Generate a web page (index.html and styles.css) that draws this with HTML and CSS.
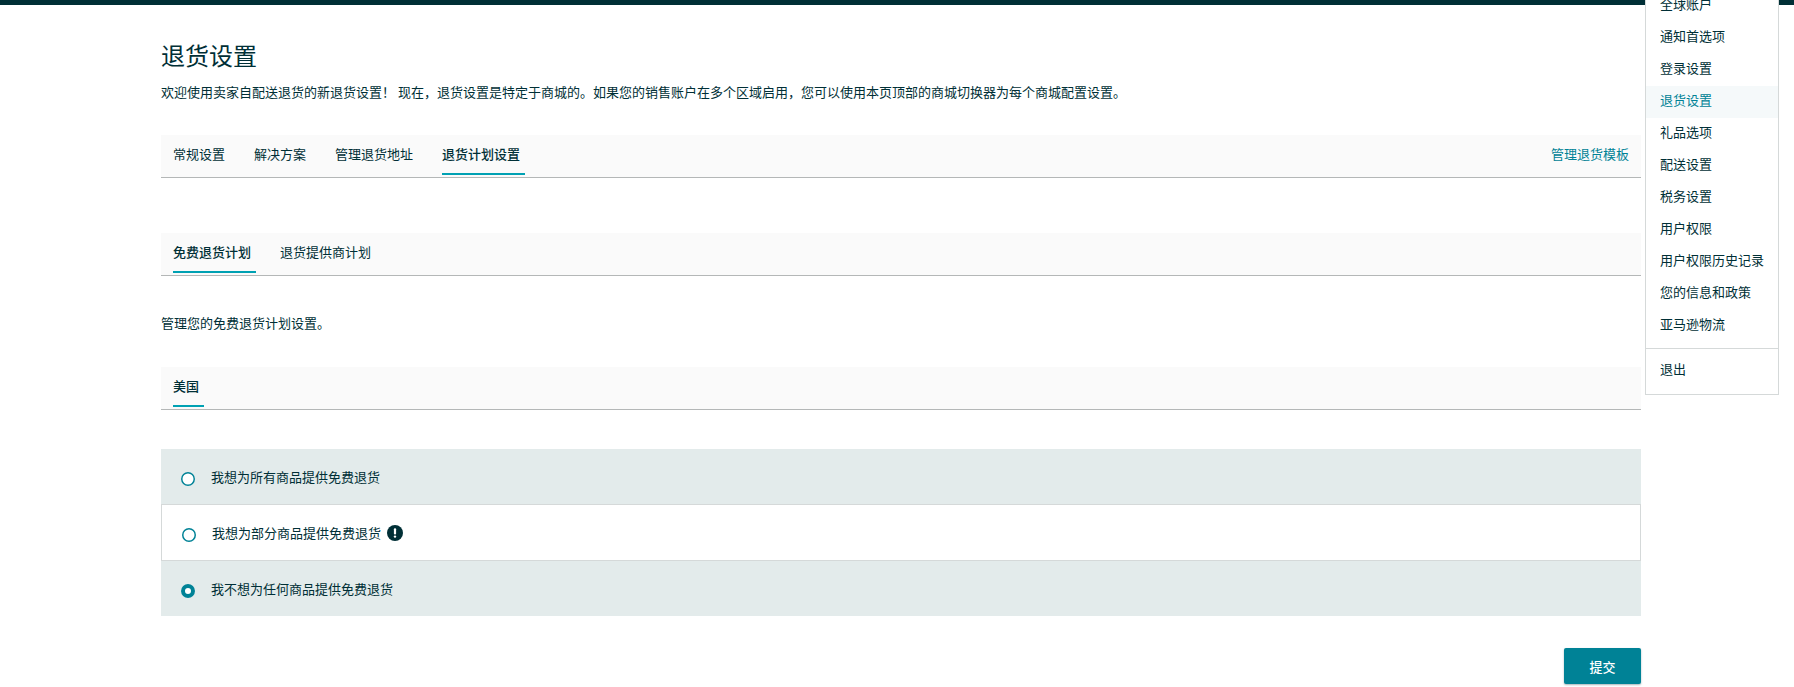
FILE: index.html
```html
<!DOCTYPE html>
<html lang="zh-CN">
<head>
<meta charset="utf-8">
<title>退货设置</title>
<link rel="stylesheet" href="styles.css">
</head>
<body>
<div class="topbar"></div>
<main class="content">
  <h1 class="title">退货设置</h1>
  <p class="intro">欢迎使用卖家自配送退货的新退货设置！ 现在，退货设置是特定于商城的。如果您的销售账户在多个区域启用，您可以使用本页顶部的商城切换器为每个商城配置设置。</p>

  <nav class="tabs tabs-main">
    <a class="tab">常规设置</a>
    <a class="tab">解决方案</a>
    <a class="tab">管理退货地址</a>
    <a class="tab active">退货计划设置</a>
    <a class="tab-link">管理退货模板</a>
  </nav>

  <nav class="tabs tabs-sub">
    <a class="tab active">免费退货计划</a>
    <a class="tab">退货提供商计划</a>
  </nav>

  <p class="desc">管理您的免费退货计划设置。</p>

  <nav class="tabs tabs-region">
    <a class="tab active">美国</a>
  </nav>

  <div class="options">
    <label class="option shaded"><span class="radio"></span><span class="label">我想为所有商品提供免费退货</span></label>
    <label class="option plain"><span class="radio"></span><span class="label">我想为部分商品提供免费退货</span>
      <svg class="alert" width="16" height="16" viewBox="0 0 16 16"><circle cx="8" cy="8" r="8" fill="#002f36"/><rect x="6.9" y="3.2" width="2.2" height="6.2" rx="1" fill="#fff"/><circle cx="8" cy="11.6" r="1.2" fill="#fff"/></svg>
    </label>
    <label class="option shaded"><span class="radio checked"></span><span class="label">我不想为任何商品提供免费退货</span></label>
  </div>

  <div class="actions"><button class="submit">提交</button></div>
</main>

<div class="menu">
  <a class="menu-item">全球账户</a>
  <a class="menu-item">通知首选项</a>
  <a class="menu-item">登录设置</a>
  <a class="menu-item current">退货设置</a>
  <a class="menu-item">礼品选项</a>
  <a class="menu-item">配送设置</a>
  <a class="menu-item">税务设置</a>
  <a class="menu-item">用户权限</a>
  <a class="menu-item">用户权限历史记录</a>
  <a class="menu-item">您的信息和政策</a>
  <a class="menu-item">亚马逊物流</a>
  <div class="menu-sep"></div>
  <a class="menu-item">退出</a>
</div>
</body>
</html>
```
FILE: styles.css
```css
html, body {
  margin: 0;
  padding: 0;
  height: 687px;
  overflow: hidden;
  background: #fff;
  color: #002f36;
  font-family: "Noto Sans CJK SC", "Liberation Sans", sans-serif;
  font-size: 13px;
}
.topbar {
  height: 5px;
  background: #002f36;
}
.content {
  width: 1480px;
  margin-left: 161px;
  display: flex;
  flex-direction: column;
}
.title {
  margin: 33px 0 0;
  font-size: 24px;
  font-weight: 400;
  line-height: 34px;
}
.intro {
  margin: 10px 0 0;
  line-height: 20px;
  white-space: nowrap;
}
.tabs {
  display: flex;
  align-items: stretch;
  gap: 29px;
  height: 42px;
  padding-left: 12px;
  background: #fafafa;
  border-bottom: 1px solid #b4b7b7;
}
.tabs-main {
  margin-top: 33px;
  padding-right: 12px;
}
.tabs-sub {
  margin-top: 55px;
}
.tabs-region {
  margin-top: 34px;
}
.tab {
  display: block;
  height: 40px;
  padding-right: 5px;
  margin-right: -5px;
  line-height: 37px;
}
.tab.active {
  font-weight: 500;
  border-bottom: 2px solid #00a1b3;
  height: 38px;
}
.tab-link {
  margin-left: auto;
  color: #008296;
  line-height: 37px;
}
.desc {
  margin: 37px 0 0;
  line-height: 20px;
}
.options {
  margin-top: 39px;
  display: flex;
  flex-direction: column;
}
.option {
  display: flex;
  align-items: center;
  box-sizing: border-box;
  padding-left: 20px;
}
.shaded {
  height: 55px;
  background: #e3ebeb;
}
.plain {
  height: 57px;
  padding-left: 20px;
  background: #fff;
  border: 1px solid #d5d9d9;
}
.radio {
  box-sizing: border-box;
  width: 14px;
  height: 14px;
  margin-top: 4px;
  border-radius: 50%;
  background: #fff;
  box-shadow: inset 0 0 0 1.5px #008296;
  flex: none;
}
.radio.checked {
  box-shadow: inset 0 0 0 4px #008296;
}
.label {
  margin-left: 16px;
  line-height: 20px;
}
.alert {
  margin-left: 6px;
  flex: none;
}
.actions {
  display: flex;
  justify-content: flex-end;
  margin-top: 32px;
}
.submit {
  width: 77px;
  height: 36px;
  padding: 0;
  border: 0;
  border-radius: 2px;
  background: #008296;
  color: #fff;
  font: inherit;
  font-weight: 500;
  box-shadow: 0 1px 2px rgba(0, 47, 54, 0.35);
}
.menu {
  position: absolute;
  top: -11px;
  left: 1645px;
  width: 132px;
  box-sizing: content-box;
  background: #fff;
  border: 1px solid #d5d9d9;
  padding-bottom: 7px;
}
.menu-item {
  display: block;
  height: 32px;
  line-height: 27px;
  padding-left: 14px;
  white-space: nowrap;
}
.menu-item.current {
  background: #f5f9fa;
  color: #008296;
}
.menu-sep {
  height: 1px;
  margin: 6px 0;
  background: #d5d9d9;
}
```
